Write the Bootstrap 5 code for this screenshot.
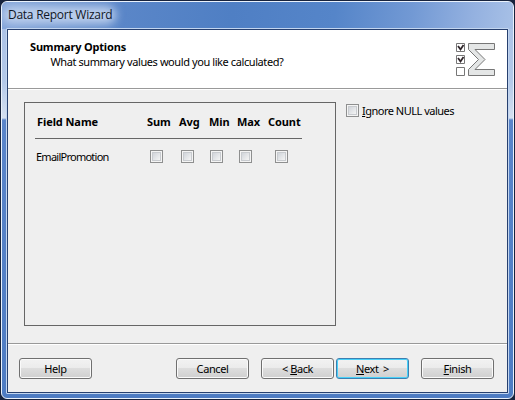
<!DOCTYPE html>
<html lang="en">
<head>
<meta charset="utf-8">
<title>Data Report Wizard</title>
<link href="https://cdn.jsdelivr.net/npm/bootstrap@5.3.0/dist/css/bootstrap.min.css" rel="stylesheet">
<style>
body{background:#18243f;width:515px;height:400px;overflow:hidden;font-family:"Noto Sans","Open Sans",sans-serif;font-size:11px;line-height:14px;color:#000;letter-spacing:-.41px}
.wizard{width:515px;height:400px;padding:1px;background:#17233d}
.glass{position:relative;overflow:hidden;height:398px;border:1px solid #eaf2fc;border-radius:6px;padding:0 4px 4px;
background:linear-gradient(#a9c0e6 0,#b4c9e9 80px,#d5e0f0 116px,#5a85ca 118px,#4e7cc3 100%)}
.glass::before{content:"";position:absolute;inset:0 0 auto 0;height:27px;background:linear-gradient(97deg,#84a5d9 0,#5a86c8 24%,#4f7fc4 45%,#5585c9 65%,#7299d4 80%,#94b1e0 92%,#a7c0e6 100%)}
.glass::after{content:"";position:absolute;left:0;top:4px;width:114px;height:18px;border-radius:9px;background:#bccfec;filter:blur(5px)}
.caption-bar{position:relative;z-index:1;height:26px;padding:4px 0 0 2px;font-family:"Open Sans",sans-serif;font-size:12px;line-height:17px;color:#101626;letter-spacing:-.26px}
.client{position:relative;z-index:1;height:366px;border:1px solid #c3d6f0;border-radius:1px}
.client-in{height:364px;border:1px solid #27406f;background:#efefef}
.head{height:59px;background:#fff;border-bottom:1px solid #999;padding:10px 12px 0 22px}
.head-title{font-weight:700;letter-spacing:-.17px;line-height:14px;margin-bottom:1px}
.head-hint{padding-left:20.5px}
.main{height:254px;border-top:1px solid #fff;padding:12px 0 0 16px}
.fields{width:312px;height:224px;border:1px solid #666;padding:12px 0 0 10px}
.grid-row{display:grid;width:267px}
.grid-head{grid-template-columns:110px 32px 30px 28px 31px 34px;height:24px;border-bottom:1px solid #666;font-weight:700;padding-left:2px;letter-spacing:-.08px}
.grid-body{grid-template-columns:114px 31px 29px 29px 36px 13px;padding:11px 0 0 1px}
.field-label{letter-spacing:-.75px}
.box{display:block;width:13px;height:13px;border:1px solid #8e8f8f;background:linear-gradient(135deg,#c6cbd2,#f6f6f6 85%);box-shadow:inset 0 0 0 1px #f4f4f4,inset 0 0 0 2px #c8cbcf}
.null-option{margin:2px 0 0 10px;gap:3px;letter-spacing:-.5px}
.foot{border-top:1px solid #999;box-shadow:inset 0 1px #fff;height:49px;padding:14px 13px 0 11px}
.wbtn{width:73px;height:21px;padding:0;font-size:11px;line-height:19px;border:1px solid #707070;border-radius:3px;color:#000;background:linear-gradient(#f2f2f2 0,#ebebeb 48%,#dddddd 50%,#cfcfcf 100%);box-shadow:inset 0 0 0 1px #fafafa;letter-spacing:inherit}
.wbtn.primary{border-color:#3c7fb1;box-shadow:inset 0 0 0 1px #48d0f8;word-spacing:2px}
.gap-wide{margin-left:12px}
.gap-tight{margin-left:2px}
u{text-underline-offset:1px;text-decoration-thickness:1px}
</style>
<script src="https://cdn.jsdelivr.net/npm/bootstrap@5.3.0/dist/js/bootstrap.bundle.min.js"></script>
</head>
<body>
<div class="wizard"><div class="glass">
<div class="caption-bar">Data Report Wizard</div>
<div class="client"><div class="client-in">
<header class="head d-flex justify-content-between">
<div><div class="head-title">Summary Options</div><div class="head-hint">What summary values would you like calculated?</div></div>
<svg width="40" height="36" viewBox="0 0 40 36" fill="none"><g fill="#fff" stroke="#777"><path d="M1.5 3.500h8v8h-8zM1.500 15.500h8v8h-8zM1.500 27.500h8v8h-8z"/></g><path d="M3 6l2.500 3.500L8.500 5M3 18l2.500 3.500L8.500 17" stroke="#30262b" stroke-width="1.800"/><path d="M13.500 3.500H39.500V9.500H20L30 19.500 20 29.500H39.500V35.500H13.500V29.500L23.500 19.500 13.500 9.500z" fill="#e4e6e6" stroke="#777"/></svg>
</header>
<main class="main d-flex align-items-start">
<section class="fields">
<div class="grid-row grid-head"><span>Field Name</span><span>Sum</span><span>Avg</span><span>Min</span><span>Max</span><span>Count</span></div>
<div class="grid-row grid-body"><span class="field-label">EmailPromotion</span><i class="box"></i><i class="box"></i><i class="box"></i><i class="box"></i><i class="box"></i></div>
</section>
<label class="null-option d-flex"><i class="box"></i><span><u>I</u>gnore NULL values</span></label>
</main>
<footer class="foot d-flex">
<button class="btn wbtn">Help</button>
<button class="btn wbtn ms-auto">Cancel</button>
<button class="btn wbtn gap-wide">&lt; <u>B</u>ack</button>
<button class="btn wbtn primary gap-tight"><u>N</u>ext &gt;</button>
<button class="btn wbtn gap-wide"><u>F</u>inish</button>
</footer>
</div></div>
</div></div>
</body>
</html>
